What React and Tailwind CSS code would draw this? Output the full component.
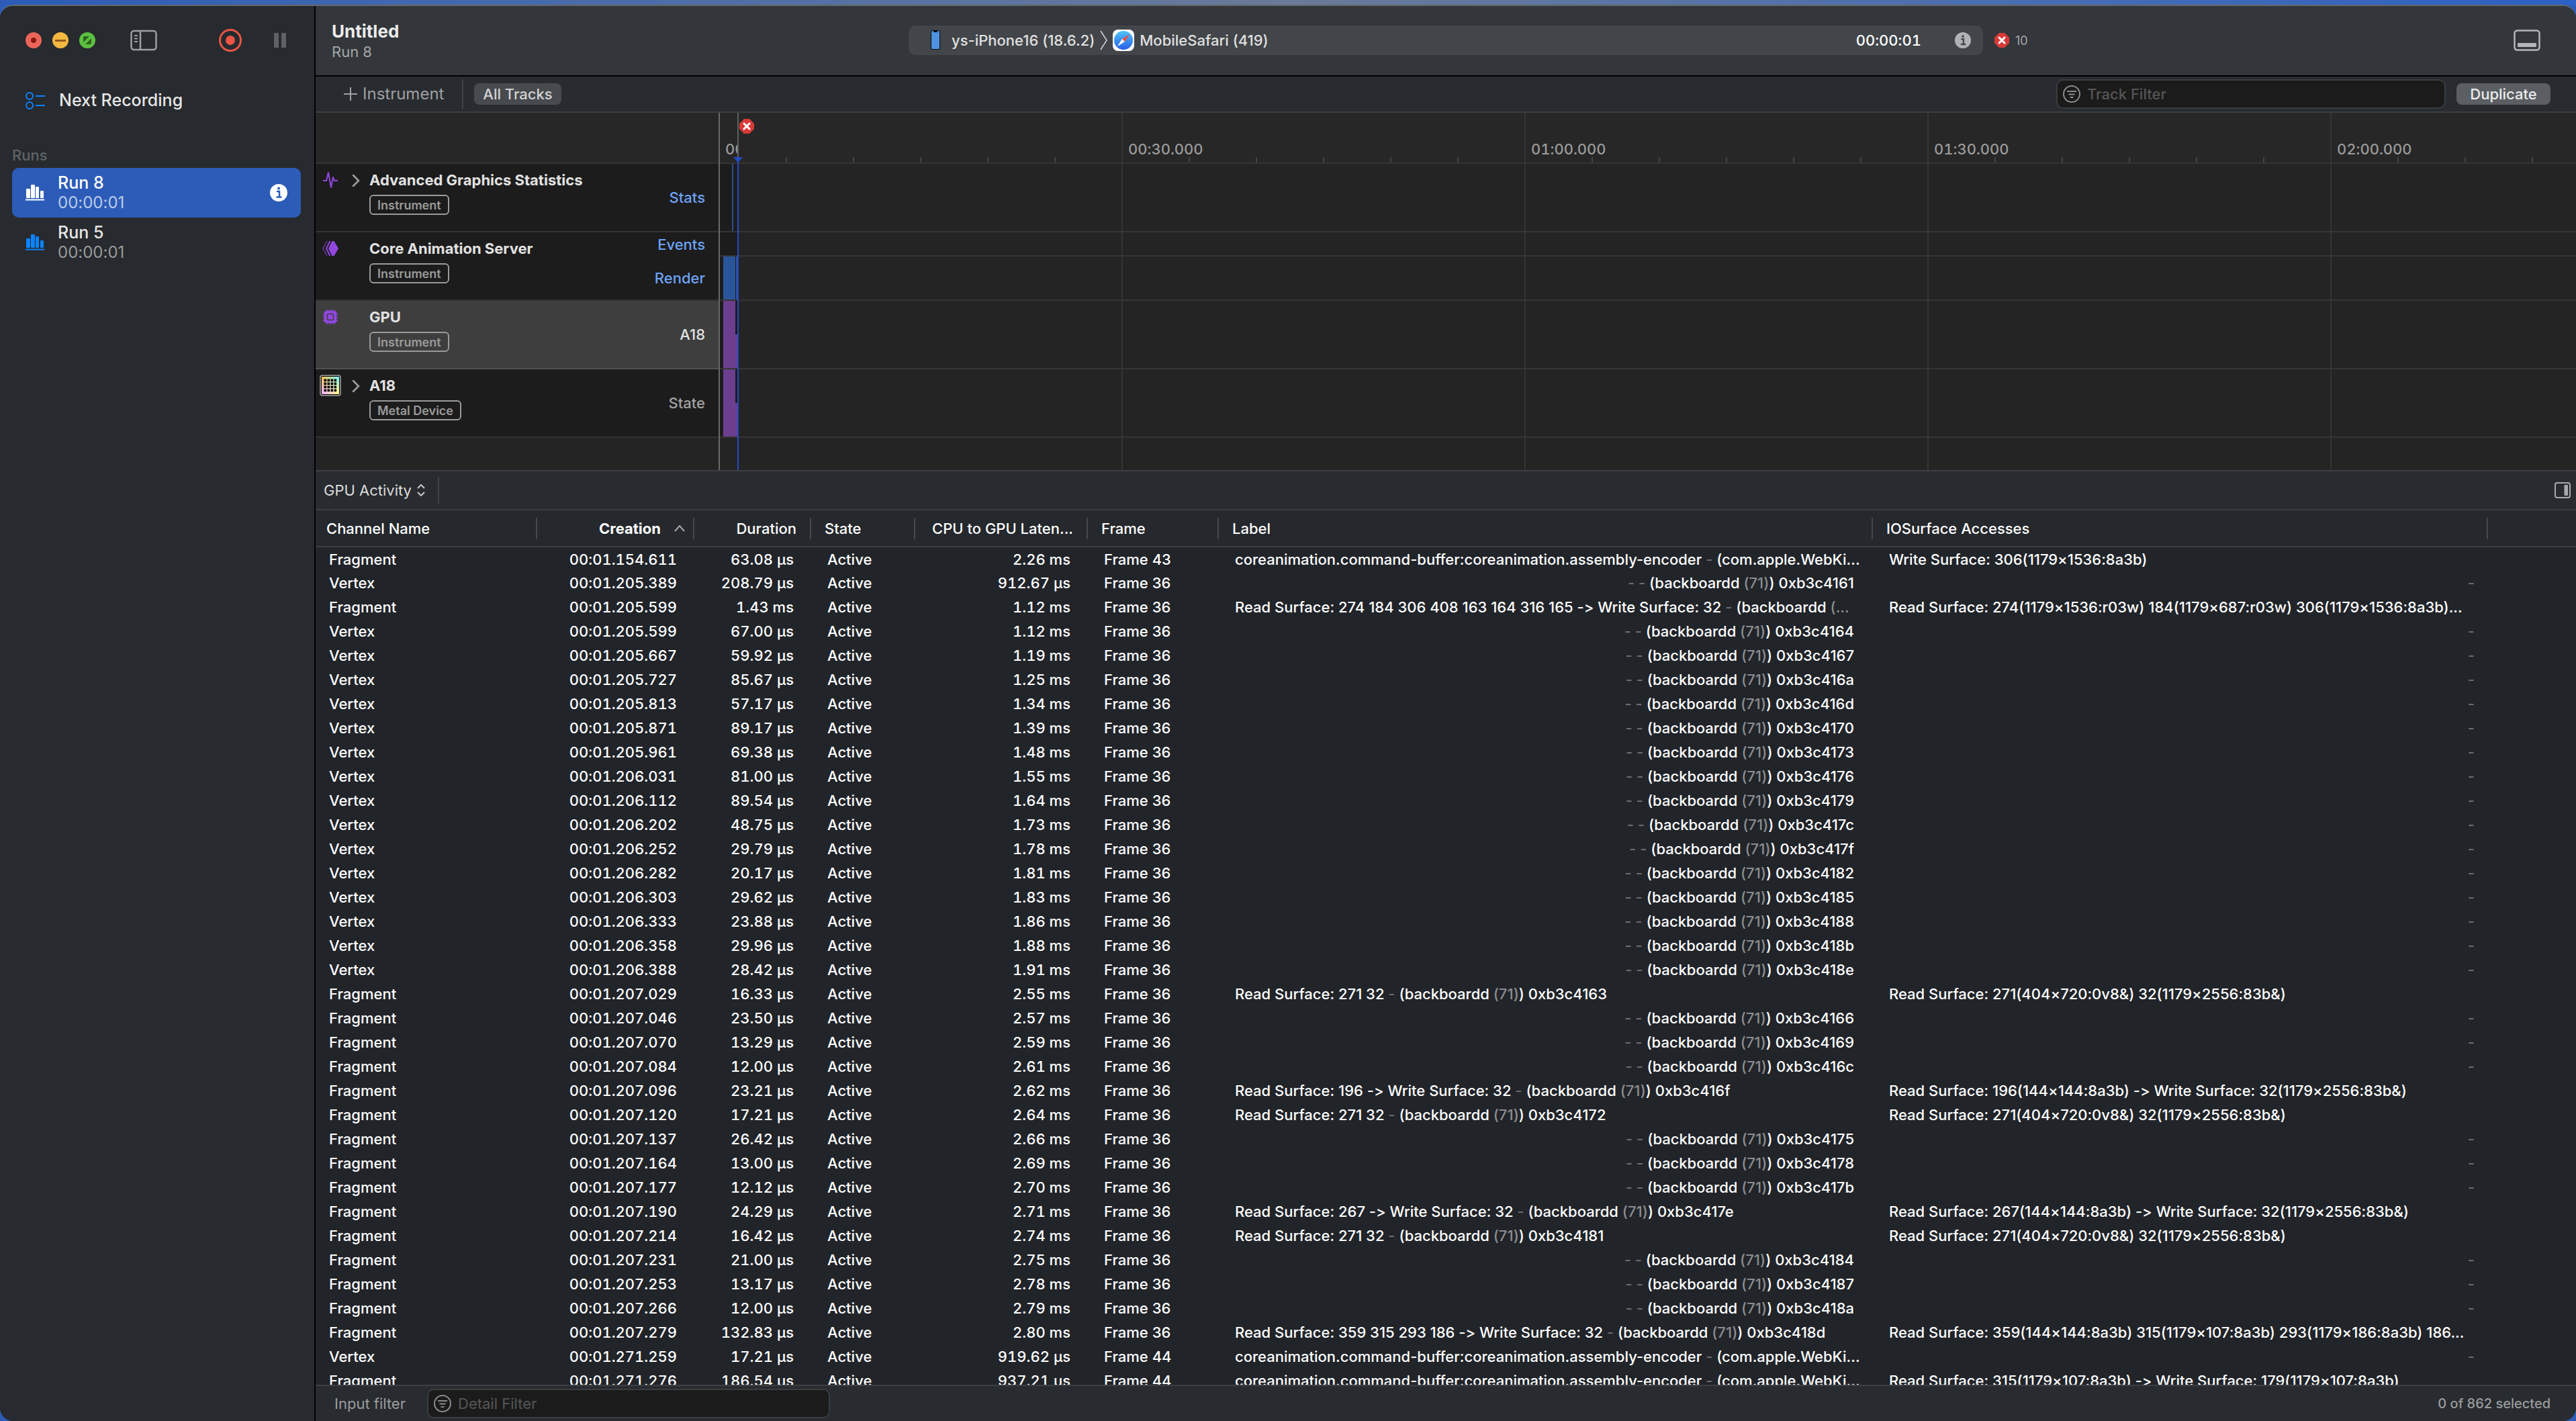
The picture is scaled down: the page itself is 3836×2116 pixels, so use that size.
import { useState } from 'react'

const RUNS = [
    { name: 'Run 8', time: '00:00:01' },
    { name: 'Run 5', time: '00:00:01' },
]

// a label without a read text is right aligned and only holds the process and its encoder id
const bb = (id, read) => ({ read, id })

const READ_271 = 'Read Surface: 271(404×720:0v8&) 32(1179×2556:83b&)'

// channel, creation, duration, latency, frame, label, surfaces
const ROWS = [
    ['Fragment', '154.611', '63.08 µs', '2.26 ms', 43, { webkit: true }, 'Write Surface: 306(1179×1536:8a3b)'],
    ['Vertex', '205.389', '208.79 µs', '912.67 µs', 36, bb('0xb3c4161')],
    ['Fragment', '205.599', '1.43 ms', '1.12 ms', 36, { read: 'Read Surface: 274 184 306 408 163 164 316 165 -> Write Surface: 32', cut: true }, 'Read Surface: 274(1179×1536:r03w) 184(1179×687:r03w) 306(1179×1536:8a3b)...'],
    ['Vertex', '205.599', '67.00 µs', '1.12 ms', 36, bb('0xb3c4164')],
    ['Vertex', '205.667', '59.92 µs', '1.19 ms', 36, bb('0xb3c4167')],
    ['Vertex', '205.727', '85.67 µs', '1.25 ms', 36, bb('0xb3c416a')],
    ['Vertex', '205.813', '57.17 µs', '1.34 ms', 36, bb('0xb3c416d')],
    ['Vertex', '205.871', '89.17 µs', '1.39 ms', 36, bb('0xb3c4170')],
    ['Vertex', '205.961', '69.38 µs', '1.48 ms', 36, bb('0xb3c4173')],
    ['Vertex', '206.031', '81.00 µs', '1.55 ms', 36, bb('0xb3c4176')],
    ['Vertex', '206.112', '89.54 µs', '1.64 ms', 36, bb('0xb3c4179')],
    ['Vertex', '206.202', '48.75 µs', '1.73 ms', 36, bb('0xb3c417c')],
    ['Vertex', '206.252', '29.79 µs', '1.78 ms', 36, bb('0xb3c417f')],
    ['Vertex', '206.282', '20.17 µs', '1.81 ms', 36, bb('0xb3c4182')],
    ['Vertex', '206.303', '29.62 µs', '1.83 ms', 36, bb('0xb3c4185')],
    ['Vertex', '206.333', '23.88 µs', '1.86 ms', 36, bb('0xb3c4188')],
    ['Vertex', '206.358', '29.96 µs', '1.88 ms', 36, bb('0xb3c418b')],
    ['Vertex', '206.388', '28.42 µs', '1.91 ms', 36, bb('0xb3c418e')],
    ['Fragment', '207.029', '16.33 µs', '2.55 ms', 36, bb('0xb3c4163', 'Read Surface: 271 32'), READ_271],
    ['Fragment', '207.046', '23.50 µs', '2.57 ms', 36, bb('0xb3c4166')],
    ['Fragment', '207.070', '13.29 µs', '2.59 ms', 36, bb('0xb3c4169')],
    ['Fragment', '207.084', '12.00 µs', '2.61 ms', 36, bb('0xb3c416c')],
    ['Fragment', '207.096', '23.21 µs', '2.62 ms', 36, bb('0xb3c416f', 'Read Surface: 196 -> Write Surface: 32'), 'Read Surface: 196(144×144:8a3b) -> Write Surface: 32(1179×2556:83b&)'],
    ['Fragment', '207.120', '17.21 µs', '2.64 ms', 36, bb('0xb3c4172', 'Read Surface: 271 32'), READ_271],
    ['Fragment', '207.137', '26.42 µs', '2.66 ms', 36, bb('0xb3c4175')],
    ['Fragment', '207.164', '13.00 µs', '2.69 ms', 36, bb('0xb3c4178')],
    ['Fragment', '207.177', '12.12 µs', '2.70 ms', 36, bb('0xb3c417b')],
    ['Fragment', '207.190', '24.29 µs', '2.71 ms', 36, bb('0xb3c417e', 'Read Surface: 267 -> Write Surface: 32'), 'Read Surface: 267(144×144:8a3b) -> Write Surface: 32(1179×2556:83b&)'],
    ['Fragment', '207.214', '16.42 µs', '2.74 ms', 36, bb('0xb3c4181', 'Read Surface: 271 32'), READ_271],
    ['Fragment', '207.231', '21.00 µs', '2.75 ms', 36, bb('0xb3c4184')],
    ['Fragment', '207.253', '13.17 µs', '2.78 ms', 36, bb('0xb3c4187')],
    ['Fragment', '207.266', '12.00 µs', '2.79 ms', 36, bb('0xb3c418a')],
    ['Fragment', '207.279', '132.83 µs', '2.80 ms', 36, bb('0xb3c418d', 'Read Surface: 359 315 293 186 -> Write Surface: 32'), 'Read Surface: 359(144×144:8a3b) 315(1179×107:8a3b) 293(1179×186:8a3b) 186...'],
    ['Vertex', '271.259', '17.21 µs', '919.62 µs', 44, { webkit: true }],
    ['Fragment', '271.276', '186.54 µs', '937.21 µs', 44, { webkit: true }, 'Read Surface: 315(1179×107:8a3b) -> Write Surface: 179(1179×107:8a3b)'],
]

function ErrorBadge() {
    return (
        <svg viewBox="0 0 24 24" className="size-6 shrink-0" aria-hidden="true">
            <path d="M8 1h8l7 7v8l-7 7H8l-7-7V8z" fill="#d93a37" />
            <path d="m8 8 8 8M16 8l-8 8" stroke="#fff" strokeWidth="3" strokeLinecap="round" />
        </svg>
    )
}

function InfoDot({ fill, mark, className }) {
    return (
        <svg viewBox="0 0 26 26" className={className} aria-hidden="true">
            <circle cx="13" cy="13" r="13" fill={fill} />
            <circle cx="13" cy="6.5" r="2" fill={mark} />
            <path d="M10 11h4v8M9.5 19.5h8" stroke={mark} strokeWidth="2.5" fill="none" />
        </svg>
    )
}

function FilterIcon() {
    return (
        <svg viewBox="0 0 26 26" className="size-[26px] shrink-0" fill="none" stroke="#8a8a8a" strokeWidth="2" aria-hidden="true">
            <circle cx="13" cy="13" r="12" />
            <path d="M6 9h14M8.5 13.5h9M10.5 18h5" />
        </svg>
    )
}

function BarsIcon({ className }) {
    return (
        <svg viewBox="0 0 28 24" className={className} fill="currentColor" aria-hidden="true">
            <rect x="1" y="6" width="6" height="14" rx="1" />
            <rect x="8" y="0" width="6" height="20" rx="1" />
            <rect x="15" y="3" width="5" height="17" rx="1" />
            <rect x="22" y="9" width="5" height="11" rx="1" />
            <rect x="0" y="21.5" width="28" height="2" />
        </svg>
    )
}

function SidebarIcon() {
    return (
        <svg viewBox="0 0 40 32" className="w-10 h-8" fill="none" stroke="#9b9fa1" strokeWidth="2.5" aria-hidden="true">
            <rect x="1.5" y="2" width="37" height="28" rx="4" />
            <path d="M15 2v28" />
            <path d="M6 9h5M6 13.5h5M6 18h5" strokeWidth="2" />
        </svg>
    )
}

function Waveform() {
    return (
        <svg viewBox="0 0 24 24" className="size-6" fill="none" stroke="#9147e0" strokeWidth="2" strokeLinejoin="round" aria-hidden="true">
            <path d="M1 13h5L9 1l4 22 3-15 2 5h5" />
        </svg>
    )
}

function Layers() {
    return (
        <svg viewBox="0 0 24 24" className="size-6" fill="none" stroke="#9147e0" aria-hidden="true">
            <path d="M17.5 1 24 12l-6.500 11h-3L9 12l5.500-11z" fill="#9147e0" stroke="none" />
            <path d="M11.5 1 6 12l5.500 11" strokeWidth="2" />
            <path d="M7 1 1 12l6 11" strokeWidth="1.5" strokeDasharray="2 1" />
        </svg>
    )
}

function Chip() {
    return (
        <svg viewBox="0 0 24 24" className="size-6" aria-hidden="true">
            <path d="M7 1v22M10.500 1v22M14 1v22M17.500 1v22M1 7h22M1 10.500h22M1 14h22M1 17.500h22" stroke="#9147e0" strokeWidth="1.5" />
            <rect x="3" y="3" width="18" height="18" rx="3" fill="#9147e0" />
            <rect x="7.5" y="7.5" width="9" height="9" rx="1" fill="none" stroke="#3e3e3e" strokeWidth="1.5" />
        </svg>
    )
}

function MetalDevice() {
    return (
        <svg viewBox="0 0 32 32" className="size-8" aria-hidden="true">
            <defs>
                <linearGradient id="metal-top" x1="0" y1="0" x2="1" y2="0">
                    <stop offset="0" stopColor="#ffc23d" />
                    <stop offset="1" stopColor="#6ff6ff" />
                </linearGradient>
                <linearGradient id="metal-bottom" x1="0" y1="0" x2="1" y2="0">
                    <stop offset="0" stopColor="#f3b0ff" />
                    <stop offset="1" stopColor="#fffb8a" />
                </linearGradient>
                <linearGradient id="metal-fade" x1="0" y1="0" x2="0" y2="1">
                    <stop offset="0.1" stopColor="#000" />
                    <stop offset="0.8" stopColor="#fff" />
                </linearGradient>
                <mask id="metal-mask"><rect width="32" height="32" fill="url(#metal-fade)" /></mask>
            </defs>
            <rect x="1" y="1" width="30" height="30" rx="3" fill="#111" stroke="#a5a5a5" strokeWidth="1.5" />
            <rect x="3" y="3" width="26" height="26" fill="url(#metal-top)" />
            <rect x="3" y="3" width="26" height="26" fill="url(#metal-bottom)" mask="url(#metal-mask)" />
            {[0, 1, 2, 3].map(r => [0, 1, 2, 3].map(c => (
                <rect key={`${r}${c}`} x={6.5 + c * 5} y={6.5 + r * 5} width="3.6" height="3.6" fill="#000" />
            )))}
        </svg>
    )
}

function Safari() {
    return (
        <svg viewBox="0 0 34 34" className="size-[34px]" aria-hidden="true">
            <defs>
                <linearGradient id="safari" x1="0" y1="0" x2="0" y2="1">
                    <stop offset="0" stopColor="#4fc3fa" />
                    <stop offset="1" stopColor="#2a5fe8" />
                </linearGradient>
            </defs>
            <rect x="1" y="1" width="32" height="32" rx="8" fill="#fff" />
            <circle cx="17" cy="17" r="14" fill="url(#safari)" />
            <path d="m26 8-11 7 4 4z" fill="#f0503c" />
            <path d="m8 26 7-11 4 4z" fill="#fff" />
        </svg>
    )
}

const TRACKS = [
    { name: 'Advanced Graphics Statistics', badge: 'Instrument', icon: <Waveform />, open: true, lanes: ['Stats'], link: true, plot: 'stats' },
    { name: 'Core Animation Server', badge: 'Instrument', icon: <Layers />, lanes: ['Events', 'Render'], link: true, plot: 'render' },
    { name: 'GPU', badge: 'Instrument', icon: <Chip />, lanes: ['A18'], selected: true, plot: 'gpu' },
    { name: 'A18', badge: 'Metal Device', icon: <MetalDevice />, open: true, lanes: ['State'], plot: 'gpu' },
]

function TrackHeader({ track }) {
    const { selected, link } = track
    return (
        <div className={`h-[102px] flex border-b-2 ${selected ? 'bg-[#3e3e3e] border-[#515151]' : 'bg-[#1c1c1c] border-[#333333]'}`}>
            <div className="w-11 shrink-0 flex justify-center pt-2">
                <div className="h-8 flex items-center">{track.icon}</div>
            </div>
            <div className="w-9 shrink-0 flex pl-2.5 pt-4">
                {track.open && (
                    <svg viewBox="0 0 12 18" className="w-3 h-[18px]" fill="none" stroke="#a0a0a0" strokeWidth="2.5" strokeLinecap="round" aria-hidden="true">
                        <path d="m2 1 8 8-8 8" />
                    </svg>
                )}
            </div>
            <div className="grow pt-2">
                <div className="text-[22px] leading-8 font-bold text-[#e2e2e2]">{track.name}</div>
                <div className="inline-flex items-center h-[30px] mt-1.5 px-2.5 rounded-md border-2 border-[#9a9a9a] text-[18px] font-semibold text-[#9a9a9a]">{track.badge}</div>
            </div>
            <div className="flex flex-col text-[22px] font-medium text-right pr-5">
                {track.lanes.map((lane, i) => (
                    <div
                        key={lane}
                        className={`flex items-center justify-end ${track.lanes.length === 1 || i === 1 ? 'grow' : 'h-9'} ${link ? 'text-[#6ea3f6]' : selected ? 'text-[#e2e2e2]' : 'text-[#a3a3a3]'}`}
                    >
                        {lane}
                    </div>
                ))}
            </div>
        </div>
    )
}

function TrackPlot({ kind }) {
    return (
        <div className="h-[102px] flex border-b-2 border-[#353535]">
            <div className="w-[27px] shrink-0 bg-[#1c1c1c] flex">
                {kind === 'stats' && <div className="w-0.5 h-full ml-[18px] bg-[#2b4f8c]" />}
                {kind === 'render' && (
                    <div className="grow flex flex-col">
                        <div className="h-9 border-b-2 border-[#353535]" />
                        <div className="grow flex gap-px pl-[5px]">
                            <div className="w-[18px] bg-[#2b559b]" />
                            <div className="grow bg-[#2b559b]" />
                        </div>
                    </div>
                )}
                {kind === 'gpu' && (
                    <div className="grow flex items-end pl-[5px]">
                        <div className="w-[18px] h-full bg-[#6b3f8e]" />
                        <div className="grow h-1/2 bg-[#6b3f8e]" />
                    </div>
                )}
            </div>
            <div className="grow">
                {kind === 'render' && <div className="h-9 border-b-2 border-[#353535]" />}
            </div>
        </div>
    )
}

function Ruler() {
    const marks = ['00:00.000', '00:30.000', '01:00.000', '01:30.000', '02:00.000']
    return (
        <div className="h-[74px] flex bg-[#272727] overflow-hidden">
            {marks.map((m, i) => (
                <div key={m} className="w-[600px] shrink-0 flex flex-col justify-end">
                    <div className="h-6 pl-2 text-[22px] leading-6 font-medium tabular-nums text-[#9b9b9b]">
                        {/* the first mark is hidden past the playhead */}
                        {i === 0 ? <span className="block w-[19px] overflow-hidden">{m}</span> : m}
                    </div>
                    <div className="h-2 flex">
                        {[0, 1, 2, 3, 4, 5].map(t => (
                            <div key={t} className="w-[100px] flex justify-end">
                                {t < 5 && <div className="w-0.5 h-2 bg-[#434343]" />}
                            </div>
                        ))}
                    </div>
                </div>
            ))}
        </div>
    )
}

function Timeline() {
    return (
        <section className="h-[534px] shrink-0 flex border-b-2 border-[#3c4043] bg-[#242424]">
            <div className="w-[602px] shrink-0 flex flex-col border-r-2 border-[#696969]">
                <div className="h-[76px] bg-[#272727] border-b-2 border-[#333333]" />
                {TRACKS.map(t => <TrackHeader key={t.name} track={t} />)}
            </div>
            <div className="grow min-w-0 relative overflow-hidden">
                <div className="border-b-2 border-[#353535]"><Ruler /></div>
                {TRACKS.map(t => <TrackPlot key={t.name} kind={t.plot} />)}

                {/* 30 second grid lines */}
                <div className="absolute inset-0 flex pointer-events-none">
                    {[0, 1, 2, 3].map(i => <div key={i} className="w-[600px] shrink-0 border-r-2 border-[#353535]" />)}
                </div>

                {/* Playhead */}
                <div className="absolute inset-y-0 left-[26px] w-0.5 bg-[#2449c8]">
                    <div className="h-[66px] bg-[#5f5f5f]" />
                </div>
                <svg viewBox="0 0 14 8" className="absolute left-5 top-[66px] w-3.5 h-2" aria-hidden="true">
                    <path d="M0 0h14L7 8z" fill="#2449c8" />
                </svg>
                <div className="absolute left-7 top-2"><ErrorBadge /></div>
            </div>
        </section>
    )
}

const Dim = ({ children }) => <span className="text-[#8b8d8f]">{children}</span>
const Dash = ({ children }) => <span className="text-[#6a6d70]">{children}</span>

function LabelCell({ label }) {
    if (label.webkit) {
        return <>coreanimation.command-buffer:coreanimation.assembly-encoder <Dash>-</Dash> (com.apple.WebKi...</>
    }
    if (label.cut) {
        return <>{label.read} <Dash>-</Dash> (backboardd <Dim>(...</Dim></>
    }
    return (
        <>
            {label.read ? <>{label.read} <Dash>-</Dash></> : <Dash>- -</Dash>} (backboardd <Dim>(71)</Dim>) {label.id}
        </>
    )
}

function HeadCell({ children, right, bold }) {
    return (
        <th className={`p-0 ${bold ? 'font-bold' : 'font-medium'}`}>
            <div className={`h-8 flex items-center border-r-2 border-[#45484b] px-5 whitespace-nowrap ${right ? 'justify-end' : ''}`}>
                {children}
            </div>
        </th>
    )
}

function DetailTable() {
    return (
        <div className="grow basis-0 min-h-0 overflow-hidden bg-[#212429]">
            <table className="w-full table-fixed border-collapse text-[22px] leading-6 text-white font-medium">
                <colgroup>
                    <col className="w-[330px]" />
                    <col className="w-[234px]" />
                    <col className="w-[174px]" />
                    <col className="w-[155px]" />
                    <col className="w-[257px]" />
                    <col className="w-[195px]" />
                    <col className="w-[974px]" />
                    <col className="w-[916px]" />
                    <col />
                </colgroup>
                <thead>
                    <tr className="h-[54px] bg-[#25282c] border-b-2 border-[#3c4043] text-left">
                        <th className="p-0 font-medium">
                            <div className="h-8 flex items-center border-r-2 border-[#45484b] px-4">Channel Name</div>
                        </th>
                        <HeadCell right bold>
                            Creation
                            <svg viewBox="0 0 16 10" className="w-4 h-2.5 ml-5 -mr-2" fill="none" stroke="#a8a8a8" strokeWidth="2" aria-hidden="true">
                                <path d="m1 9 7-8 7 8" />
                            </svg>
                        </HeadCell>
                        <HeadCell right>Duration</HeadCell>
                        <HeadCell>State</HeadCell>
                        <HeadCell right>CPU to GPU Laten...</HeadCell>
                        <HeadCell>Frame</HeadCell>
                        <HeadCell>Label</HeadCell>
                        <HeadCell>IOSurface Accesses</HeadCell>
                        <th />
                    </tr>
                </thead>
                <tbody className="whitespace-nowrap">
                    {ROWS.map(([channel, creation, duration, latency, frame, label, surfaces]) => (
                        <tr key={creation + duration} className="h-9">
                            <td className="py-0 px-5">{channel}</td>
                            <td className="py-0 pr-[26px] text-right tabular-nums">00:01.{creation}</td>
                            <td className="py-0 pr-[26px] text-right tabular-nums">{duration}</td>
                            <td className="py-0 px-6">Active</td>
                            <td className="py-0 pr-[26px] text-right tabular-nums">{latency}</td>
                            <td className="py-0 px-6">Frame {frame}</td>
                            <td className={`py-0 pl-6 ${label.webkit || label.read ? '' : 'pr-7 text-right'}`}>
                                <LabelCell label={label} />
                            </td>
                            <td className={`py-0 pl-6 pr-5 ${surfaces ? '' : 'text-right'}`}>
                                {surfaces || <Dash>-</Dash>}
                            </td>
                            <td />
                        </tr>
                    ))}
                </tbody>
            </table>
        </div>
    )
}

function Sidebar({ active, onSelect }) {
    return (
        <aside className="w-[470px] shrink-0 flex flex-col bg-[#272a2e] border-r-2 border-black">
            <div className="h-[102px] flex items-center pl-[38px] pr-[42px]">
                <div className="flex gap-4">
                    <button type="button" aria-label="Close" className="size-6 rounded-full bg-[#ec6559] flex items-center justify-center">
                        <span className="size-2 rounded-full bg-[#8a1a10]" />
                    </button>
                    <button type="button" aria-label="Minimize" className="size-6 rounded-full bg-[#f2b840] flex items-center justify-center">
                        <span className="w-4 h-[3px] bg-[#90591d]" />
                    </button>
                    <button type="button" aria-label="Exit full screen" className="size-6 rounded-full bg-[#5dc043] flex items-center justify-center">
                        <svg viewBox="0 0 14 14" className="size-3.5" fill="#2a6218" aria-hidden="true">
                            <path d="M1 10V3a2 2 0 0 1 2-2h7zM13 4v7a2 2 0 0 1-2 2H4z" />
                        </svg>
                    </button>
                </div>
                <button type="button" aria-label="Toggle sidebar" className="ml-[52px]"><SidebarIcon /></button>
                <button type="button" aria-label="Record" className="ml-auto size-[34px] rounded-full border-[3px] border-[#eb5545] flex items-center justify-center">
                    <span className="size-3.5 rounded-full bg-[#eb5545]" />
                </button>
                <button type="button" aria-label="Pause" className="ml-12 flex gap-1">
                    <span className="w-[7px] h-[22px] bg-[#5f6264]" />
                    <span className="w-[7px] h-[22px] bg-[#5f6264]" />
                </button>
            </div>
            <button type="button" className="h-[78px] flex items-center pl-[38px] text-[25px] font-medium text-[#e6e6e6]">
                <svg viewBox="0 0 30 28" className="w-[30px] h-7 mr-5" fill="none" stroke="#0a84ff" strokeWidth="2" aria-hidden="true">
                    <circle cx="6" cy="7" r="5" />
                    <circle cx="6" cy="21" r="5" />
                    <path d="M15 7h14M15 21h14" />
                </svg>
                Next Recording
            </button>
            <div className="h-[61px] flex items-end pb-0.5 pl-[18px] text-[22px] font-medium text-[#5f6467]">Runs</div>
            <div className="flex flex-col pl-[18px] pr-5">
                {RUNS.map(run => {
                    const on = run.name === active
                    return (
                        <button
                            key={run.name}
                            type="button"
                            onClick={() => onSelect(run.name)}
                            className={`h-[74px] flex items-center rounded-[10px] px-5 text-left ${on ? 'bg-[#2c5cb8] text-white' : 'text-[#e6e6e6]'}`}
                        >
                            <BarsIcon className={`w-7 h-6 mr-5 ${on ? 'text-white' : 'text-[#0a84ff]'}`} />
                            <span className="grow flex flex-col">
                                <span className="text-[25px] leading-[30px] font-medium">{run.name}</span>
                                <span className={`text-[24px] leading-[30px] ${on ? 'text-[#bccbe8]' : 'text-[#999b9d]'}`}>{run.time}</span>
                            </span>
                            {on && <InfoDot fill="#fff" mark="#2c5cb8" className="size-[26px]" />}
                        </button>
                    )
                })}
            </div>
        </aside>
    )
}

function TitleBar() {
    return (
        <header className="h-[105px] shrink-0 flex items-start bg-[#33363a] border-b-2 border-black">
            <div className="grow basis-0 pt-[22px]">
                <h1 className="ml-6 text-[26px] leading-8 font-bold text-[#ececec]">Untitled</h1>
                <p className="ml-6 text-[22px] leading-7 text-[#a3a6a8]">Run 8</p>
            </div>
            <div className="w-[1600px] h-11 mt-[29px] flex items-center rounded-[10px] bg-[#424549] pl-[33px] pr-[18px] text-[22px] font-medium text-[#e0e0e0]">
                <svg viewBox="0 0 14 30" className="w-3.5 h-[30px] mr-[17px]" aria-hidden="true">
                    <rect x="0.5" y="0.5" width="13" height="28" rx="2.5" fill="#4f93e0" stroke="#0b0b0b" />
                    <rect x="4" y="1" width="6" height="2" rx="1" fill="#0b0b0b" />
                </svg>
                ys-iPhone16 (18.6.2)
                <svg viewBox="0 0 12 30" className="w-3 h-[30px] ml-2 mr-1.5" fill="none" stroke="#d5d5d5" strokeWidth="1.5" aria-hidden="true">
                    <path d="m1 1 9 14-9 14" />
                </svg>
                <Safari />
                <span className="ml-[7px]">MobileSafari (419)</span>
                <span className="ml-auto text-white tabular-nums">00:00:01</span>
                <InfoDot fill="#b0b3b5" mark="#424549" className="size-6 ml-[50px]" />
            </div>
            <div className="grow basis-0 h-11 mt-[29px] flex items-center">
                <div className="ml-4"><ErrorBadge /></div>
                <span className="ml-2 text-[18px] text-[#a3a6a8]">10</span>
                <button type="button" aria-label="Toggle detail area" className="ml-auto mr-[53px]">
                    <svg viewBox="0 0 40 32" className="w-10 h-8" fill="none" stroke="#b3b6b8" strokeWidth="2.5" aria-hidden="true">
                        <rect x="1.5" y="1.5" width="37" height="29" rx="4" />
                        <rect x="6" y="20" width="28" height="6" rx="1" fill="#b3b6b8" stroke="none" />
                    </svg>
                </button>
            </div>
        </header>
    )
}

function TrackBar() {
    return (
        <div className="h-[54px] shrink-0 flex items-center bg-[#282b2f] border-b-2 border-[#3c4043] text-[22px] font-medium pr-[38px]">
            <button type="button" className="flex items-center w-[220px] pl-[42px] h-11 border-r-2 border-[#404346] text-[24px] font-normal text-[#9ea0a2]">
                <svg viewBox="0 0 20 20" className="size-5 mr-2" stroke="#9ea0a2" strokeWidth="2" aria-hidden="true">
                    <path d="M10 0v20M0 10h20" />
                </svg>
                Instrument
            </button>
            <button type="button" className="ml-4 h-8 w-[130px] rounded-lg bg-[#474a4e] text-[#d2d3d4]">All Tracks</button>
            <label className="ml-auto w-[580px] h-11 flex items-center gap-2.5 px-2 rounded-[10px] border-2 border-[#3a3d40] bg-[#1b1b1b]">
                <FilterIcon />
                <input aria-label="Track Filter" placeholder="Track Filter" className="grow bg-transparent outline-none placeholder:text-[#565656]" />
            </label>
            <button type="button" className="ml-4 h-8 w-[140px] rounded-lg bg-[#5b5f63] text-[#ececec]">Duplicate</button>
        </div>
    )
}

function App() {
    const [active, setActive] = useState('Run 8')

    return (
        <div className="h-screen flex flex-col overflow-hidden bg-[#2c5cb8] font-['Inter','Noto_Sans',sans-serif] [font-feature-settings:'calt'_0]">
            <div className="h-[7px] shrink-0 bg-linear-to-r from-[#2c5cb8] via-[#6a7a98] to-[#2c60c4]" />
            <div className="grow min-h-0 flex rounded-[20px] overflow-hidden border-t-2 border-[#64686a] bg-[#272a2e]">
                <Sidebar active={active} onSelect={setActive} />
                <main className="grow min-w-0 flex flex-col">
                    <TitleBar />
                    <TrackBar />
                    <Timeline />
                    <div className="h-[58px] shrink-0 flex items-center bg-[#282b2f] border-b-2 border-[#3c4043]">
                        <button type="button" className="h-10 w-[184px] flex items-center pl-3 border-r-2 border-[#404346] text-[22px] text-[#dcdcdc]">
                            GPU Activity
                            <svg viewBox="0 0 12 18" className="w-3 h-[18px] ml-2" fill="none" stroke="#c8c8c8" strokeWidth="2" aria-hidden="true">
                                <path d="m1 6 5-5 5 5M1 12l5 5 5-5" />
                            </svg>
                        </button>
                        <button type="button" aria-label="Toggle inspector" className="ml-auto mr-2">
                            <svg viewBox="0 0 24 24" className="size-6" fill="none" stroke="#a8abad" strokeWidth="2" aria-hidden="true">
                                <rect x="1" y="1" width="22" height="22" rx="3" />
                                <rect x="14.5" y="4" width="5.5" height="16" rx="1" fill="#a8abad" stroke="none" />
                            </svg>
                        </button>
                    </div>
                    <DetailTable />
                    <footer className="h-[54px] shrink-0 flex items-center bg-[#282b2f] border-t-2 border-[#3c4043] pl-7 pr-[38px] text-[22px]">
                        <label htmlFor="detail" className="w-[138px] text-[#9a9c9e]">Input filter</label>
                        <div className="w-[600px] h-11 flex items-center gap-2.5 px-2 rounded-[10px] border-2 border-[#3a3d40] bg-[#1b1b1b]">
                            <FilterIcon />
                            <input id="detail" placeholder="Detail Filter" className="grow bg-transparent outline-none placeholder:text-[#565656]" />
                        </div>
                        <span className="ml-auto text-[20px] font-medium text-[#9a9c9e]">0 of 862 selected</span>
                    </footer>
                </main>
            </div>
        </div>
    )
}

export default App
